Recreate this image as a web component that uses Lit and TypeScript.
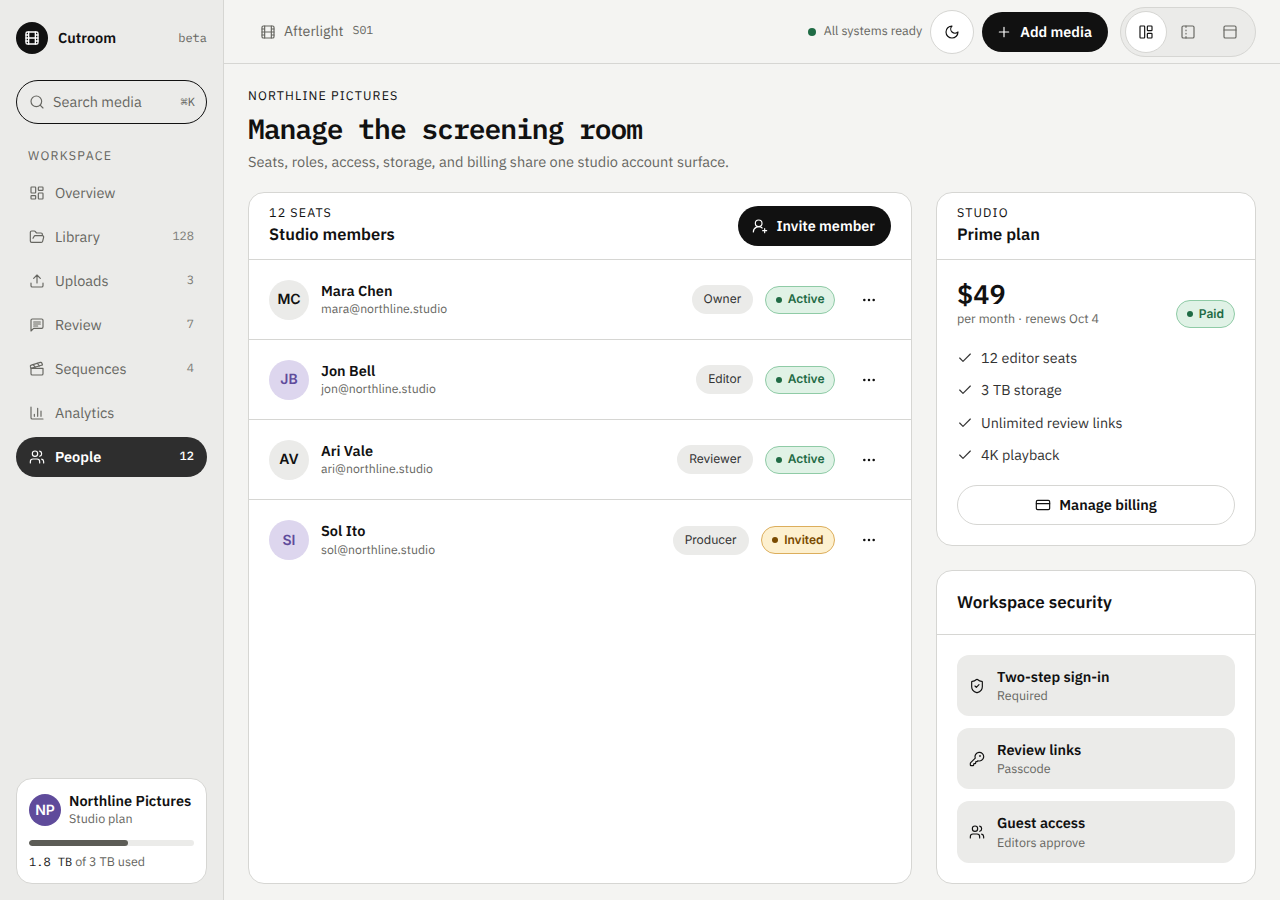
import { LitElement, html, css, svg } from "lit";
import { customElement } from "lit/decorators.js";

const P: Record<string, any> = {
  film: svg`<rect x="3" y="3" width="18" height="18" rx="2"/><path d="M7 3v18M3 7.5h4M3 12h18M3 16.5h4M17 3v18M17 7.5h4M17 16.5h4"/>`,
  search: svg`<circle cx="11" cy="11" r="8"/><path d="m21 21-4.3-4.3"/>`,
  dash: svg`<rect x="3" y="3" width="7" height="9" rx="1"/><rect x="14" y="3" width="7" height="5" rx="1"/><rect x="14" y="12" width="7" height="9" rx="1"/><rect x="3" y="16" width="7" height="5" rx="1"/>`,
  folder: svg`<path d="m6 14 1.5-2.9A2 2 0 0 1 9.24 10H20a2 2 0 0 1 1.94 2.5l-1.54 6a2 2 0 0 1-1.95 1.5H4a2 2 0 0 1-2-2V5a2 2 0 0 1 2-2h3.9a2 2 0 0 1 1.69.9l.81 1.2a2 2 0 0 0 1.67.9H18a2 2 0 0 1 2 2v2"/>`,
  upload: svg`<path d="M21 15v4a2 2 0 0 1-2 2H5a2 2 0 0 1-2-2v-4M17 8l-5-5-5 5M12 3v12"/>`,
  msg: svg`<path d="M21 15a2 2 0 0 1-2 2H7l-4 4V5a2 2 0 0 1 2-2h14a2 2 0 0 1 2 2z"/><path d="M7 7.5h10M7 10.5h10M7 13.5h6"/>`,
  clap: svg`<path d="M20.2 6 3 11l-.9-2.4c-.3-1.1.3-2.2 1.3-2.5l13.5-4c1.1-.3 2.2.3 2.5 1.3Z"/><path d="m6.2 5.3 3.1 3.9M12.4 3.4l3.1 4M3 11h18v8a2 2 0 0 1-2 2H5a2 2 0 0 1-2-2Z"/>`,
  chart: svg`<path d="M3 3v16a2 2 0 0 0 2 2h16M8 17v-3M13 17V5M18 17V9"/>`,
  users: svg`<path d="M16 21v-2a4 4 0 0 0-4-4H6a4 4 0 0 0-4 4v2"/><circle cx="9" cy="7" r="4"/><path d="M22 21v-2a4 4 0 0 0-3-3.87M16 3.13a4 4 0 0 1 0 7.75"/>`,
  moon: svg`<path d="M12 3a6 6 0 0 0 9 9 9 9 0 1 1-9-9Z"/>`,
  plus: svg`<path d="M5 12h14M12 5v14"/>`,
  layout: svg`<rect x="3" y="3" width="7" height="18" rx="1"/><rect x="14" y="3" width="7" height="7" rx="1"/><rect x="14" y="14" width="7" height="7" rx="1"/>`,
  panel: svg`<rect x="3" y="3" width="18" height="18" rx="2"/><path d="M9 3v2M9 9v1M9 14v1M9 19v2"/>`,
  top: svg`<rect x="3" y="3" width="18" height="18" rx="2"/><path d="M3 9h18"/>`,
  invite: svg`<path d="M2 21a8 8 0 0 1 13.292-6"/><circle cx="10" cy="8" r="5"/><path d="M19 16v6M22 19h-6"/>`,
  more: svg`<circle cx="5" cy="12" r="1" fill="currentColor"/><circle cx="12" cy="12" r="1" fill="currentColor"/><circle cx="19" cy="12" r="1" fill="currentColor"/>`,
  check: svg`<path d="M20 6 9 17l-5-5"/>`,
  card: svg`<rect x="2" y="5" width="20" height="14" rx="2"/><path d="M2 10h20"/>`,
  shield: svg`<path d="M20 13c0 5-3.5 7.5-7.66 8.95a1 1 0 0 1-.67-.01C7.5 20.5 4 18 4 13V6a1 1 0 0 1 1-1c2 0 4.5-1.2 6.24-2.72a1.17 1.17 0 0 1 1.52 0C14.51 3.81 17 5 19 5a1 1 0 0 1 1 1z"/><path d="m9 12 2 2 4-4"/>`,
  key: svg`<path d="M2.586 17.414A2 2 0 0 0 2 18.828V21a1 1 0 0 0 1 1h3a1 1 0 0 0 1-1v-1a1 1 0 0 1 1-1h1a1 1 0 0 0 1-1v-1a1 1 0 0 1 1-1h.172a2 2 0 0 0 1.414-.586l.814-.814a6.5 6.5 0 1 0-4-4z"/><circle cx="16.5" cy="7.5" r=".5"/>`,
};
const icon = (n: string, s = 16, w = 1.75) =>
  html`<svg class="ic" width=${s} height=${s} viewBox="0 0 24 24" fill="none" stroke="currentColor" stroke-width=${w} stroke-linecap="round" stroke-linejoin="round">${P[n]}</svg>`;

const NAV = [
  ["dash", "Overview", ""],
  ["folder", "Library", "128"],
  ["upload", "Uploads", "3"],
  ["msg", "Review", "7"],
  ["clap", "Sequences", "4"],
  ["chart", "Analytics", ""],
  ["users", "People", "12"],
];
const MEMBERS = [
  ["MC", "Mara Chen", "mara@northline.studio", "Owner", "Active", false],
  ["JB", "Jon Bell", "jon@northline.studio", "Editor", "Active", true],
  ["AV", "Ari Vale", "ari@northline.studio", "Reviewer", "Active", false],
  ["SI", "Sol Ito", "sol@northline.studio", "Producer", "Invited", true],
] as const;
const FEATURES = ["12 editor seats", "3 TB storage", "Unlimited review links", "4K playback"];
const SEC = [
  ["shield", "Two-step sign-in", "Required"],
  ["key", "Review links", "Passcode"],
  ["users", "Guest access", "Editors approve"],
];

@customElement("app-root")
export class AppRoot extends LitElement {
  static styles = css`
    :host {
      display: grid;
      grid-template-columns: 224px 1fr;
      height: 900px;
      overflow: hidden;
      background: #f4f4f2;
      color: #111;
      font-family: "IBM Plex Sans", Inter, sans-serif;
      font-size: 14.5px;
      text-rendering: geometricPrecision;
      --line: #d6d6d3;
      --mono: "IBM Plex Mono", "Liberation Mono", monospace;
      --inter: Inter, sans-serif;
      --muted: #666661;
    }
    * { box-sizing: border-box; }
    .ic { flex: none; display: block; }
    .side {
      background: #ebebe9;
      border-right: 1px solid var(--line);
      padding: 22px 16px 16px;
      display: flex;
      flex-direction: column;
      height: 900px;
    }
    .brand { display: flex; align-items: center; gap: 10px; height: 32px; }
    .logo {
      width: 32px; height: 32px; border-radius: 50%;
      background: #111; color: #fff;
      display: grid; place-items: center;
    }
    .brand b { font-weight: 600; flex: 1; padding-bottom: 1px; }
    .beta { font-family: var(--mono); font-size: 12px; color: var(--muted); }
    .search {
      margin-top: 26px; height: 44px;
      border: 1px solid #111; border-radius: 22px;
      display: flex; align-items: center; gap: 8px;
      padding: 0 11px 0 12px; color: var(--muted);
    }
    .search span { flex: 1; padding-bottom: 1px; }
    .search kbd { font-family: var(--mono); font-size: 12px; }
    .label {
      margin: 25px 0 0 12px; font-size: 12.5px; line-height: 15px;
      letter-spacing: 0.1em; color: var(--muted);
    }
    nav { margin-top: 9px; display: flex; flex-direction: column; gap: 4px; }
    .item {
      height: 40px; border-radius: 20px; padding: 0 13px;
      display: flex; align-items: center; gap: 10px; color: var(--muted);
    }
    .item span { flex: 1; padding-bottom: 1px; }
    .item em { font-style: normal; font-family: var(--mono); font-size: 12px; color: #7d7d78; padding-bottom: 2px; }
    .item.on { background: #2e2e2e; color: #fff; }
    .item.on span { font-weight: 600; }
    .item.on em { color: #fff; font-weight: 500; }
    .org {
      margin-top: auto; background: #fff;
      border: 1px solid var(--line); border-radius: 16px;
      padding: 15px 12px 13px; height: 106px;
    }
    .org-top { display: flex; gap: 8px; align-items: flex-start; height: 32px; }
    .np {
      width: 32px; height: 32px; border-radius: 50%; background: #5f4b9b; color: #fff;
      display: grid; place-items: center; font: 600 14px var(--inter);
    }
    .org b { display: block; font-weight: 600; line-height: 14px; }
    .org small { display: block; font-size: 12.5px; line-height: 16px; margin-top: 3px; color: var(--muted); }
    .bar { height: 6px; border-radius: 3px; background: #ebebe9; margin-top: 14px; overflow: hidden; }
    .bar i { display: block; height: 100%; background: #5c5c56; border-radius: 3px; }
    .used { margin-top: 8px; font-size: 12.5px; line-height: 16px; color: var(--muted); }
    .used code { font-family: var(--mono); font-size: 12px; color: #222; }
    .main { min-width: 0; display: flex; flex-direction: column; height: 900px; }
    .top {
      height: 64px; flex: none; border-bottom: 1px solid var(--line);
      display: flex; align-items: center; padding: 0 24px 0 36px; gap: 8px;
    }
    .crumb { display: flex; align-items: center; gap: 8px; color: var(--muted); flex: 1; font-size: 14.2px; }
    .crumb span, .crumb code { padding-bottom: 2px; }
    .crumb code { font-family: var(--mono); font-size: 11.5px; margin-left: 1px; }
    .ready { display: flex; align-items: center; gap: 8px; font-size: 12.5px; color: var(--muted); padding-bottom: 1px; }
    .ready i { width: 8px; height: 8px; border-radius: 50%; background: #1f6b45; margin-top: 1px; }
    .round {
      width: 44px; height: 44px; border-radius: 50%; background: #fff;
      border: 1px solid var(--line); display: grid; place-items: center;
    }
    .btn {
      height: 40px; border-radius: 20px; background: #111; color: #fff;
      display: flex; align-items: center; gap: 8px; padding: 0 16px 0 14px;
      font-weight: 600; font-size: 14.4px;
    }
    .btn span, .manage span { padding-bottom: 1px; }
    .seg {
      margin-left: 4px; height: 50px; border: 1px solid var(--line); border-radius: 25px;
      background: #ebebe9; display: flex; padding: 3px 4px; color: var(--muted);
    }
    .seg div { width: 42px; height: 42px; border-radius: 50%; display: grid; place-items: center; }
    .seg .on { background: #fff; border: 1px solid var(--line); color: #111; }
    .body { flex: 1; min-height: 0; padding: 24px 24px 16px; display: flex; flex-direction: column; }
    .eyebrow { font-size: 12.5px; line-height: 16px; letter-spacing: 0.09em; }
    h1 {
      margin: 7px 0 0; font: 600 28px/36px var(--mono); letter-spacing: -0.037em; color: #111;
    }
    .sub { margin: 6px 0 0; line-height: 20px; color: var(--muted); font-size: 14.55px; }
    .grid { margin-top: 19px; flex: 1; min-height: 0; display: grid; grid-template-columns: 1fr 320px; gap: 24px; }
    .card { background: #fff; border: 1px solid var(--line); border-radius: 16px; overflow: hidden; }
    .col { display: flex; flex-direction: column; gap: 24px; min-height: 0; }
    .col .grow { flex: 1; }
    .head {
      height: 67px; padding: 0 20px 3px; border-bottom: 1px solid var(--line);
      display: flex; align-items: center; justify-content: space-between;
    }
    .head .btn { margin-top: 3px; }
    .head h2 { margin: 3px 0 0; font-size: 16.5px; line-height: 20px; font-weight: 600; }
    .row {
      height: 80px; padding: 0 20px; border-bottom: 1px solid var(--line);
      display: flex; align-items: center; gap: 12px;
    }
    .row:last-child { border-bottom: 0; }
    .av {
      width: 40px; height: 40px; border-radius: 50%; background: #ebebe9;
      display: grid; place-items: center; font: 600 14px var(--inter);
    }
    .av.alt { background: #ddd6ee; color: #5f4b9b; }
    .who { flex: 1; min-width: 0; }
    .who b { display: block; font-weight: 600; line-height: 18px; }
    .who small { display: block; font-size: 12.25px; line-height: 16px; margin-top: 1px; color: var(--muted); }
    .row:last-child .who small { margin-top: 2px; }
    .role {
      height: 29px; border-radius: 15px; background: #ebebe9; padding: 0 12px 2px;
      display: flex; align-items: center; font: 400 12px var(--inter); color: #333;
    }
    .st {
      height: 28px; border-radius: 14px; padding: 0 9.5px 2px;
      display: flex; align-items: center; gap: 6px;
      font: 600 12px var(--inter);
      background: #e0f2e6; border: 1px solid #8fcba6; color: #1f6b45;
    }
    .st i { width: 6px; height: 6px; border-radius: 50%; background: currentColor; margin-top: 2px; }
    .row:last-child .role, .row:last-child .st { padding-bottom: 1px; }
    .row:last-child .st i { margin-top: 1px; }
    .st.warn { background: #fdf0cf; border-color: #dcae5c; color: #7a4a00; padding-left: 10.5px; padding-right: 10.5px; }
    .dots { width: 44px; height: 44px; display: grid; place-items: center; }
    .plan { padding: 20px; }
    .price { display: flex; justify-content: space-between; align-items: flex-end; }
    .price .st { margin-bottom: -1px; padding-left: 10px; padding-right: 10px; }
    .price strong { display: block; font-size: 27px; line-height: 30px; font-weight: 600; }
    .price small { display: block; font-size: 12.5px; line-height: 16px; margin-top: 1px; color: var(--muted); }
    .feat { margin: 15px 0 0; padding: 0; list-style: none; }
    .feat li { height: 32.33px; display: flex; align-items: center; gap: 8px; color: #333; font-size: 14.3px; }
    .feat span { padding-bottom: 1px; }
    .manage {
      margin-top: 14px; height: 40px; border: 1px solid var(--line); border-radius: 20px;
      display: flex; align-items: center; justify-content: center; gap: 8px; font-weight: 600;
    }
    .sec-head { height: 64px; padding: 0 20px 2px; border-bottom: 1px solid var(--line); display: flex; align-items: center; font-size: 17px; font-weight: 600; }
    .sec { padding: 20px; display: flex; flex-direction: column; gap: 12px; }
    .tile {
      height: 61px; background: #ebebe9; border-radius: 12px; padding: 0 12px;
      display: flex; align-items: center; gap: 12px;
    }
    .tile:last-child { height: 62px; }
    .tile b { display: block; font-weight: 600; line-height: 18px; }
    .tile small { display: block; font-size: 12.5px; line-height: 16px; color: var(--muted); margin-top: 2.5px; }
  `;

  render() {
    return html`
      <aside class="side">
        <div class="brand">
          <div class="logo">${icon("film", 16, 2)}</div>
          <b>Cutroom</b><span class="beta">beta</span>
        </div>
        <div class="search">${icon("search")}<span>Search media</span><kbd>⌘K</kbd></div>
        <div class="label">WORKSPACE</div>
        <nav>
          ${NAV.map(
            ([i, t, c]) => html`<div class="item ${t === "People" ? "on" : ""}">${icon(i)}<span>${t}</span>${c ? html`<em>${c}</em>` : ""}</div>`
          )}
        </nav>
        <div class="org">
          <div class="org-top">
            <div class="np">NP</div>
            <div><b>Northline Pictures</b><small>Studio plan</small></div>
          </div>
          <div class="bar"><i style="width:60%"></i></div>
          <div class="used"><code>1.8 TB</code> of 3 TB used</div>
        </div>
      </aside>
      <div class="main">
        <header class="top">
          <div class="crumb">${icon("film")}<span>Afterlight</span><code>S01</code></div>
          <div class="ready"><i></i>All systems ready</div>
          <div class="round">${icon("moon")}</div>
          <div class="btn">${icon("plus")}<span>Add media</span></div>
          <div class="seg">
            <div class="on">${icon("layout")}</div>
            <div>${icon("panel")}</div>
            <div>${icon("top")}</div>
          </div>
        </header>
        <div class="body">
          <div class="eyebrow">NORTHLINE PICTURES</div>
          <h1>Manage the screening room</h1>
          <p class="sub">Seats, roles, access, storage, and billing share one studio account surface.</p>
          <div class="grid">
            <section class="card">
              <div class="head">
                <div><div class="eyebrow">12 SEATS</div><h2>Studio members</h2></div>
                <div class="btn">${icon("invite")}<span>Invite member</span></div>
              </div>
              ${MEMBERS.map(
                ([a, n, e, r, s, alt]) => html`<div class="row">
                  <div class="av ${alt ? "alt" : ""}">${a}</div>
                  <div class="who"><b>${n}</b><small>${e}</small></div>
                  <div class="role">${r}</div>
                  <div class="st ${s === "Invited" ? "warn" : ""}"><i></i>${s}</div>
                  <div class="dots">${icon("more")}</div>
                </div>`
              )}
            </section>
            <div class="col">
              <section class="card">
                <div class="head">
                  <div><div class="eyebrow">STUDIO</div><h2>Prime plan</h2></div>
                </div>
                <div class="plan">
                  <div class="price">
                    <div><strong>$49</strong><small>per month · renews Oct 4</small></div>
                    <div class="st"><i></i>Paid</div>
                  </div>
                  <ul class="feat">${FEATURES.map((f) => html`<li>${icon("check")}<span>${f}</span></li>`)}</ul>
                  <div class="manage">${icon("card")}<span>Manage billing</span></div>
                </div>
              </section>
              <section class="card grow">
                <div class="sec-head">Workspace security</div>
                <div class="sec">
                  ${SEC.map(
                    ([i, t, d]) => html`<div class="tile">${icon(i)}<div><b>${t}</b><small>${d}</small></div></div>`
                  )}
                </div>
              </section>
            </div>
          </div>
        </div>
      </div>
    `;
  }
}
